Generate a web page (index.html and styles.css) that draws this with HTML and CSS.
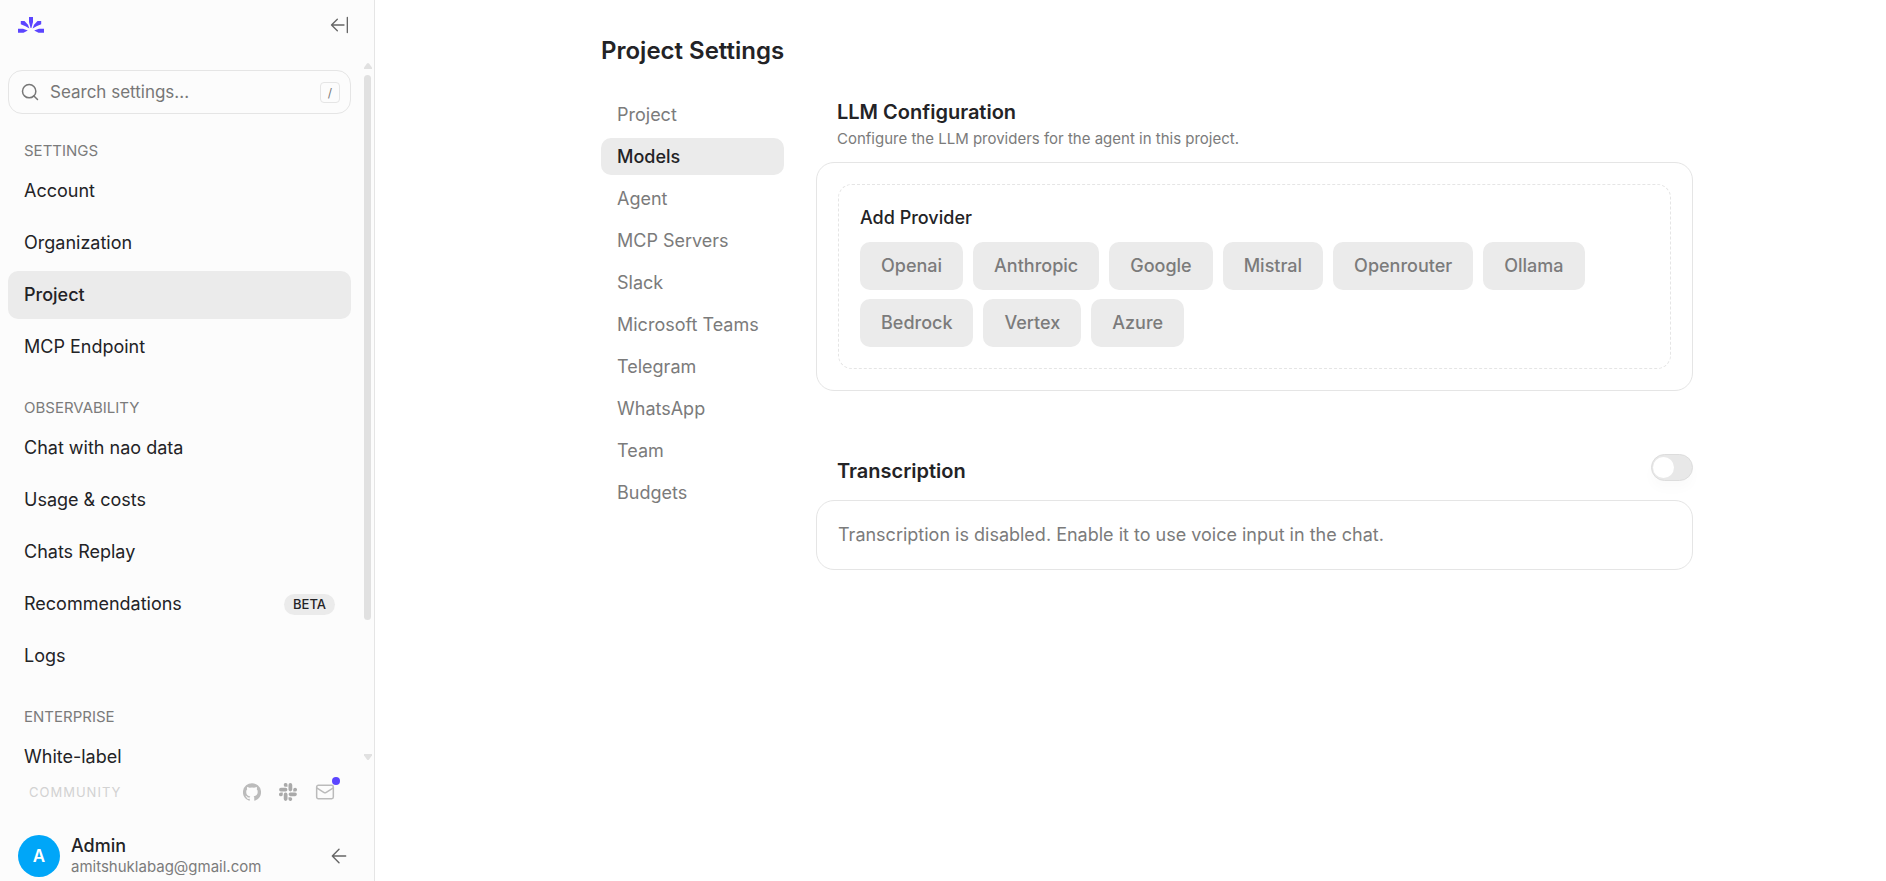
FILE: index.html
```
<!DOCTYPE html>
<html lang="en">
<head>
    <meta charset="UTF-8">
    <meta name="viewport" content="width=device-width, initial-scale=1.0">
    <title>Project Settings</title>
    <link rel="stylesheet" href="styles.css">
</head>
<body>
    <aside class="sidebar">
        <div class="sidebar-top">
            <a href="#" class="logo" aria-label="Home">
                <svg width="26" height="16" viewBox="0 0 26 16" fill="#5b45ff">
                    <path d="M11 0h4v5l-1.600 6h-.8L11 5z"/>
                    <path d="M2.800 4h3.700l3.500 3.800 1.400 3.600L7.500 9.200 2.800 7.200z"/>
                    <path d="M23.200 4h-3.700L16 7.800l-1.400 3.600 3.900-2.200 4.700-2z"/>
                    <path d="M0 11.800h5l4.800 1.700-4.300 2.200H0z"/>
                    <path d="M26 11.800h-5l-4.800 1.700 4.300 2.200H26z"/>
                </svg>
            </a>
            <button class="icon-btn" aria-label="Collapse sidebar">
                <svg width="20" height="20" viewBox="0 0 24 24" fill="none" stroke="currentColor" stroke-width="1.600" stroke-linecap="round" stroke-linejoin="round"><path d="M3 12h15M10 5l-7 7 7 7M22 3v18"/></svg>
            </button>
        </div>

        <div class="scroll-area">
            <nav class="nav">
                <label class="search">
                    <svg width="20" height="20" viewBox="0 0 24 24" fill="none" stroke="currentColor" stroke-width="1.800" stroke-linecap="round"><circle cx="11" cy="11" r="8"/><path d="M21 21l-4.300-4.300"/></svg>
                    <input type="text" placeholder="Search settings..." aria-label="Search settings">
                    <kbd>/</kbd>
                </label>

                <h2 class="nav-label">SETTINGS</h2>
                <a href="#" class="nav-item">Account</a>
                <a href="#" class="nav-item">Organization</a>
                <a href="#" class="nav-item active">Project</a>
                <a href="#" class="nav-item">MCP Endpoint</a>

                <h2 class="nav-label">OBSERVABILITY</h2>
                <a href="#" class="nav-item">Chat with nao data</a>
                <a href="#" class="nav-item">Usage &amp; costs</a>
                <a href="#" class="nav-item">Chats Replay</a>
                <a href="#" class="nav-item">Recommendations <span class="badge">BETA</span></a>
                <a href="#" class="nav-item">Logs</a>

                <h2 class="nav-label">ENTERPRISE</h2>
                <a href="#" class="nav-item">White-label</a>
            </nav>
            <div class="scrollbar">
                <svg width="8" height="6" viewBox="0 0 8 6" fill="#e1e1e1"><path d="M3 .5Q4-.5 5 .5L8 4.500V6H0V4.500z"/></svg>
                <div class="track"><div class="thumb"></div></div>
                <svg width="8" height="6" viewBox="0 0 8 6" fill="#e1e1e1"><path d="M3 5.500Q4 6.500 5 5.500L8 1.500V0H0v1.500z"/></svg>
            </div>
        </div>

        <div class="community">
            <span>COMMUNITY</span>
            <div class="community-links">
                <a href="#" aria-label="GitHub">
                    <svg width="18" height="18" viewBox="0 0 24 24" fill="currentColor"><path d="M12 .3a12 12 0 0 0-3.800 23.400c.6.1.8-.3.8-.6v-2c-3.300.7-4-1.600-4-1.600-.6-1.400-1.400-1.800-1.400-1.800-1-.7.1-.7.1-.7 1.200 0 1.900 1.200 1.900 1.200 1 1.800 2.800 1.300 3.500 1 0-.8.4-1.300.7-1.600-2.700-.3-5.500-1.300-5.500-6 0-1.200.5-2.300 1.300-3.100-.2-.4-.6-1.600 0-3.200 0 0 1-.3 3.400 1.200a11.500 11.500 0 0 1 6 0c2.300-1.500 3.300-1.200 3.300-1.200.6 1.600.2 2.800 0 3.200.9.800 1.300 1.900 1.300 3.200 0 4.600-2.800 5.600-5.500 5.900.5.400.9 1 .9 2.200v3.300c0 .3.100.7.800.6A12 12 0 0 0 12 .3"/></svg>
                </a>
                <a href="#" aria-label="Slack">
                    <svg width="18" height="18" viewBox="0 0 24 24" fill="#aaa"><path d="M5.040 15.170a2.530 2.530 0 1 1-2.520-2.530h2.520zM6.310 15.170a2.530 2.530 0 0 1 5.050 0v6.310a2.530 2.530 0 0 1-5.050 0zM8.830 5.040a2.530 2.530 0 1 1 2.530-2.520v2.520zM8.830 6.310a2.530 2.530 0 0 1 0 5.050H2.520a2.530 2.530 0 0 1 0-5.050zM18.960 8.830a2.530 2.530 0 1 1 2.520 2.530h-2.520zM17.690 8.830a2.530 2.530 0 0 1-5.050 0V2.520a2.530 2.530 0 0 1 5.050 0zM15.170 18.960a2.530 2.530 0 1 1-2.530 2.520v-2.520zM15.170 17.690a2.530 2.530 0 0 1 0-5.050h6.310a2.530 2.530 0 0 1 0 5.050z"/></svg>
                </a>
                <a href="#" class="mail" aria-label="Messages">
                    <svg width="20" height="20" viewBox="0 0 24 24" fill="none" stroke="currentColor" stroke-width="1.800" stroke-linejoin="round" stroke-linecap="round"><rect x="2" y="4" width="20" height="16" rx="2"/><path d="M22 7l-9 5.700a2 2 0 0 1-2 0L2 7"/></svg>
                    <span class="dot"></span>
                </a>
            </div>
        </div>

        <div class="user">
            <div class="avatar">A</div>
            <div class="user-info">
                <div class="user-name">Admin</div>
                <div class="user-email">amitshuklabag@gmail.com</div>
            </div>
            <button class="icon-btn" aria-label="Back">
                <svg width="20" height="20" viewBox="0 0 24 24" fill="none" stroke="currentColor" stroke-width="1.700" stroke-linecap="round" stroke-linejoin="round"><path d="M20 12H4M12 4l-8 8 8 8"/></svg>
            </button>
        </div>
    </aside>

    <main class="main">
        <div class="page">
            <h1>Project Settings</h1>
            <div class="columns">
                <nav class="tabs">
                    <a href="#">Project</a>
                    <a href="#" class="active">Models</a>
                    <a href="#">Agent</a>
                    <a href="#">MCP Servers</a>
                    <a href="#">Slack</a>
                    <a href="#">Microsoft Teams</a>
                    <a href="#">Telegram</a>
                    <a href="#">WhatsApp</a>
                    <a href="#">Team</a>
                    <a href="#">Budgets</a>
                </nav>
                <div class="content">
                    <section>
                        <div class="section-head">
                            <h2>LLM Configuration</h2>
                            <p>Configure the LLM providers for the agent in this project.</p>
                        </div>
                        <div class="card">
                            <div class="providers">
                                <h3>Add Provider</h3>
                                <div class="chips">
                                    <button>Openai</button>
                                    <button>Anthropic</button>
                                    <button>Google</button>
                                    <button>Mistral</button>
                                    <button>Openrouter</button>
                                    <button>Ollama</button>
                                    <button>Bedrock</button>
                                    <button>Vertex</button>
                                    <button>Azure</button>
                                </div>
                            </div>
                        </div>
                    </section>
                    <section>
                        <div class="section-head toggle-head">
                            <h2><label for="transcription">Transcription</label></h2>
                            <input type="checkbox" role="switch" id="transcription" class="switch">
                        </div>
                        <div class="card note">Transcription is disabled. Enable it to use voice input in the chat.</div>
                    </section>
                </div>
            </div>
        </div>
    </main>
</body>
</html>
```
FILE: styles.css
```
* {
    box-sizing: border-box;
}
body {
    margin: 0;
    display: flex;
    height: 100vh;
    font-family: Inter, "Liberation Sans", sans-serif;
    font-size: 18px;
    line-height: 24px;
    color: #232326;
    background: #fff;
}
h1, h2, h3, p {
    margin: 0;
}
a {
    color: inherit;
    text-decoration: none;
}
button {
    font: inherit;
    border: none;
    cursor: pointer;
}
svg {
    display: block;
}

/* sidebar */
.sidebar {
    width: 375px;
    flex-shrink: 0;
    display: flex;
    flex-direction: column;
    background: #fcfcfc;
    border-right: 1px solid #e5e5e5;
}
.sidebar-top {
    display: flex;
    align-items: center;
    justify-content: space-between;
    height: 50px;
    padding: 0 25px 0 18px;
    flex-shrink: 0;
}
.icon-btn {
    padding: 0;
    background: none;
    color: #666;
}
.scroll-area {
    display: flex;
    flex: 1;
    min-height: 0;
    margin-top: 12px;
}
.nav {
    flex: 1;
    display: flex;
    flex-direction: column;
    gap: 4px;
    padding: 8px 13px 0 8px;
    overflow: hidden;
}
.search {
    display: flex;
    align-items: center;
    gap: 10px;
    height: 44px;
    flex-shrink: 0;
    padding: 0 10px 0 11px;
    border: 1px solid #e5e5e5;
    border-radius: 14px;
    color: #777;
}
.search input {
    flex: 1;
    min-width: 0;
    padding: 0;
    border: none;
    outline: none;
    background: none;
    font: inherit;
    font-size: 17px;
}
.search input::placeholder {
    color: #777;
}
kbd {
    width: 20px;
    height: 21px;
    border: 1px solid #e5e5e5;
    border-radius: 4px;
    font-family: inherit;
    font-size: 12px;
    line-height: 19px;
    text-align: center;
}
.nav-label {
    flex-shrink: 0;
    padding: 23px 16px 2px;
    font-size: 15px;
    font-weight: 400;
    line-height: 20px;
    color: #7b7b7b;
}
.nav-item {
    display: flex;
    align-items: center;
    justify-content: space-between;
    height: 48px;
    flex-shrink: 0;
    padding: 0 16px;
    border-radius: 10px;
}
.nav-item.active {
    background: #ebebeb;
    font-weight: 500;
}
.badge {
    padding: 0 9px;
    border-radius: 11px;
    background: #ebebeb;
    font-size: 13px;
    font-weight: 500;
    line-height: 21px;
}
.scrollbar {
    width: 8px;
    margin-right: 2px;
    display: flex;
    flex-direction: column;
    gap: 6px;
    padding: 1px 0 9px;
}
.track {
    flex: 1;
}
.thumb {
    width: 7px;
    height: 81%;
    border-radius: 4px;
    background: #e1e1e1;
}
.community {
    display: flex;
    align-items: center;
    justify-content: space-between;
    height: 48px;
    flex-shrink: 0;
    padding: 0 39px 2px 29px;
    font-size: 13px;
    letter-spacing: 1px;
    color: #d2d2d2;
}
.community-links {
    display: flex;
    align-items: center;
    gap: 18px;
    color: #bbb;
}
.mail {
    position: relative;
}
.dot {
    position: absolute;
    top: -5px;
    right: -5px;
    width: 8px;
    height: 8px;
    border-radius: 50%;
    background: #5b45ff;
}
.user {
    display: flex;
    align-items: center;
    gap: 11px;
    height: 64px;
    flex-shrink: 0;
    padding: 18px 25px 4px 18px;
}
.avatar {
    width: 42px;
    height: 42px;
    border-radius: 50%;
    background: #00a6f8;
    color: #fff;
    font-size: 17px;
    font-weight: 600;
    line-height: 42px;
    text-align: center;
}
.user-info {
    flex: 1;
}
.user-name {
    font-weight: 500;
    line-height: 22px;
}
.user-email {
    font-size: 15px;
    line-height: 20px;
    color: #7b7b7b;
}

/* main */
.main {
    flex: 1;
    overflow: hidden;
}
.page {
    max-width: 1125px;
    margin: 0 auto;
    padding: 35px 0 0 33px;
}
h1 {
    font-size: 24px;
    font-weight: 600;
    line-height: 32px;
}
.columns {
    display: flex;
    gap: 32px;
    margin-top: 29px;
}
.tabs {
    width: 183px;
    flex-shrink: 0;
    display: flex;
    flex-direction: column;
    gap: 5px;
    color: #7b7b7b;
}
.tabs a {
    padding: 0 16px;
    border-radius: 10px;
    line-height: 37px;
}
.tabs .active {
    background: #ebebeb;
    color: #232326;
    font-weight: 500;
}
.content {
    flex: 1;
    min-width: 0;
    display: flex;
    flex-direction: column;
    gap: 63px;
}
.section-head {
    padding: 2px 0 11px 21px;
}
.section-head h2 {
    font-size: 20px;
    font-weight: 600;
    line-height: 28px;
}
.section-head p {
    margin-top: 1px;
    font-size: 15px;
    line-height: 24px;
    color: #7b7b7b;
}
.toggle-head {
    display: flex;
    justify-content: space-between;
    padding: 0 0 15px 21px;
}
.toggle-head h2 {
    padding-top: 3px;
}
.switch {
    appearance: none;
    width: 42px;
    height: 27px;
    margin: 0;
    padding: 2px 1px;
    border: 1px solid #ddd;
    border-radius: 14px;
    background: #e8e8e8;
    box-shadow: 0 8px 12px rgba(0, 0, 0, 0.02);
}
.switch::before {
    content: "";
    display: block;
    width: 21px;
    height: 21px;
    border-radius: 50%;
    background: #fff;
}
.switch:checked::before {
    margin-left: auto;
}
.card {
    padding: 21px;
    border: 1px solid #e5e5e5;
    border-radius: 18px;
}
.providers {
    padding: 21px;
    border: 1px dashed #e5e5e5;
    border-radius: 14px;
}
.providers h3 {
    font-size: 18px;
    font-weight: 500;
}
.chips {
    display: flex;
    flex-wrap: wrap;
    gap: 9px 10px;
    margin-top: 12px;
}
.chips button {
    padding: 12px 21px;
    border-radius: 10px;
    background: #ebebeb;
    color: #7b7b7b;
    font-weight: 500;
}
.note {
    color: #7b7b7b;
    line-height: 26px;
}
```
